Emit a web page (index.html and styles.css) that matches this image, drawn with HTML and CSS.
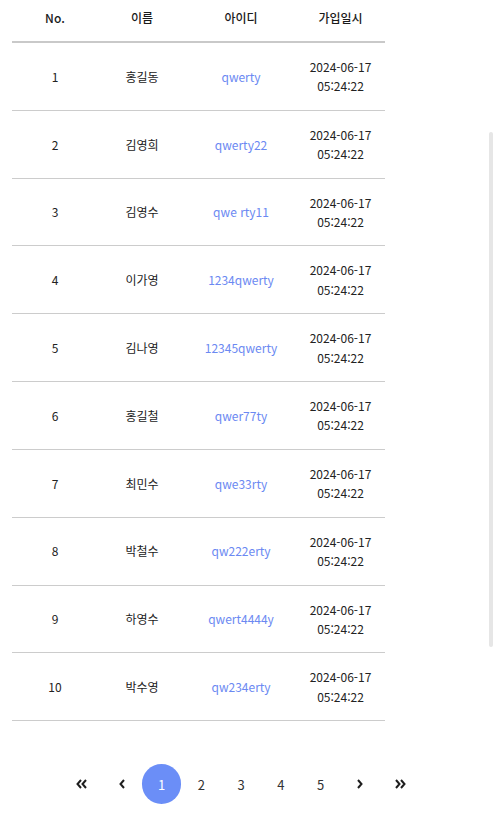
FILE: index.html
```html
<!DOCTYPE html>
<html lang="ko">
<head>
<meta charset="utf-8">
<link rel="stylesheet" href="styles.css">
</head>
<body>
<div class="page">
  <table class="users">
    <colgroup>
      <col class="c-no"><col class="c-name"><col class="c-id"><col class="c-date">
    </colgroup>
    <thead>
      <tr><th>No.</th><th>이름</th><th>아이디</th><th>가입일시</th></tr>
    </thead>
    <tbody>
      <tr><td>1</td><td>홍길동</td><td class="uid">qwerty</td><td>2024-06-17<br>05:24:22</td></tr>
      <tr><td>2</td><td>김영희</td><td class="uid">qwerty22</td><td>2024-06-17<br>05:24:22</td></tr>
      <tr><td>3</td><td>김영수</td><td class="uid">qwe rty11</td><td>2024-06-17<br>05:24:22</td></tr>
      <tr><td>4</td><td>이가영</td><td class="uid">1234qwerty</td><td>2024-06-17<br>05:24:22</td></tr>
      <tr><td>5</td><td>김나영</td><td class="uid">12345qwerty</td><td>2024-06-17<br>05:24:22</td></tr>
      <tr><td>6</td><td>홍길철</td><td class="uid">qwer77ty</td><td>2024-06-17<br>05:24:22</td></tr>
      <tr><td>7</td><td>최민수</td><td class="uid">qwe33rty</td><td>2024-06-17<br>05:24:22</td></tr>
      <tr><td>8</td><td>박철수</td><td class="uid">qw222erty</td><td>2024-06-17<br>05:24:22</td></tr>
      <tr><td>9</td><td>하영수</td><td class="uid">qwert4444y</td><td>2024-06-17<br>05:24:22</td></tr>
      <tr><td>10</td><td>박수영</td><td class="uid">qw234erty</td><td>2024-06-17<br>05:24:22</td></tr>
    </tbody>
  </table>

  <nav class="pager">
    <a class="pg arrow" aria-label="first">
      <svg width="12" height="10" viewBox="0 0 12 10"><path d="M5 1 L1.5 5 L5 9 M10 1 L6.5 5 L10 9" fill="none" stroke="#1e1e1e" stroke-width="2"/></svg>
    </a>
    <a class="pg arrow" aria-label="prev">
      <svg width="8" height="10" viewBox="0 0 8 10"><path d="M6 1 L2.5 5 L6 9" fill="none" stroke="#1e1e1e" stroke-width="2"/></svg>
    </a>
    <a class="pg active">1</a>
    <a class="pg">2</a>
    <a class="pg">3</a>
    <a class="pg">4</a>
    <a class="pg">5</a>
    <a class="pg arrow" aria-label="next">
      <svg width="8" height="10" viewBox="0 0 8 10"><path d="M2 1 L5.5 5 L2 9" fill="none" stroke="#1e1e1e" stroke-width="2"/></svg>
    </a>
    <a class="pg arrow" aria-label="last">
      <svg width="12" height="10" viewBox="0 0 12 10"><path d="M2 1 L5.5 5 L2 9 M7 1 L10.5 5 L7 9" fill="none" stroke="#1e1e1e" stroke-width="2"/></svg>
    </a>
  </nav>
</div>
<div class="scroll-thumb"></div>
</body>
</html>
```

FILE: styles.css
```css
html, body {
  margin: 0;
  padding: 0;
  background: #ffffff;
}
body {
  font-family: "Noto Sans CJK KR", "Noto Sans", sans-serif;
  font-size: 12px;
  color: #222222;
}
.page {
  width: 482px;
  padding: 0 0 20px 12px;
  box-sizing: border-box;
}
.users {
  width: 373px;
  border-collapse: collapse;
  table-layout: fixed;
}
.c-no { width: 86px; }
.c-name { width: 88px; }
.c-id { width: 110px; }
.c-date { width: 89px; }
.users th {
  font-weight: 500;
  font-size: 12px;
  line-height: 20px;
  padding: 8px 0 13px;
  border-bottom: 2px solid #c9c9c9;
  text-align: center;
  color: #1a1a1a;
}
.users td {
  text-align: center;
  padding: 14px 0;
  line-height: 19.4px;
  border-bottom: 1px solid #cccccc;
  vertical-align: middle;
}
.users .uid {
  color: #6b89f2;
}
.pager {
  display: flex;
  justify-content: center;
  align-items: center;
  margin: 43px 0 0 -12px;
  width: 482px;
}
.pg {
  width: 39.75px;
  height: 40px;
  display: flex;
  align-items: center;
  justify-content: center;
  font-size: 13px;
  color: #333333;
  border-radius: 50%;
}
.pg.active {
  background: #6b8ef7;
  color: #ffffff;
}
.scroll-thumb {
  position: fixed;
  left: 489px;
  top: 132px;
  width: 4px;
  height: 515px;
  background: #e6e6e6;
  border-radius: 2px;
}
```
